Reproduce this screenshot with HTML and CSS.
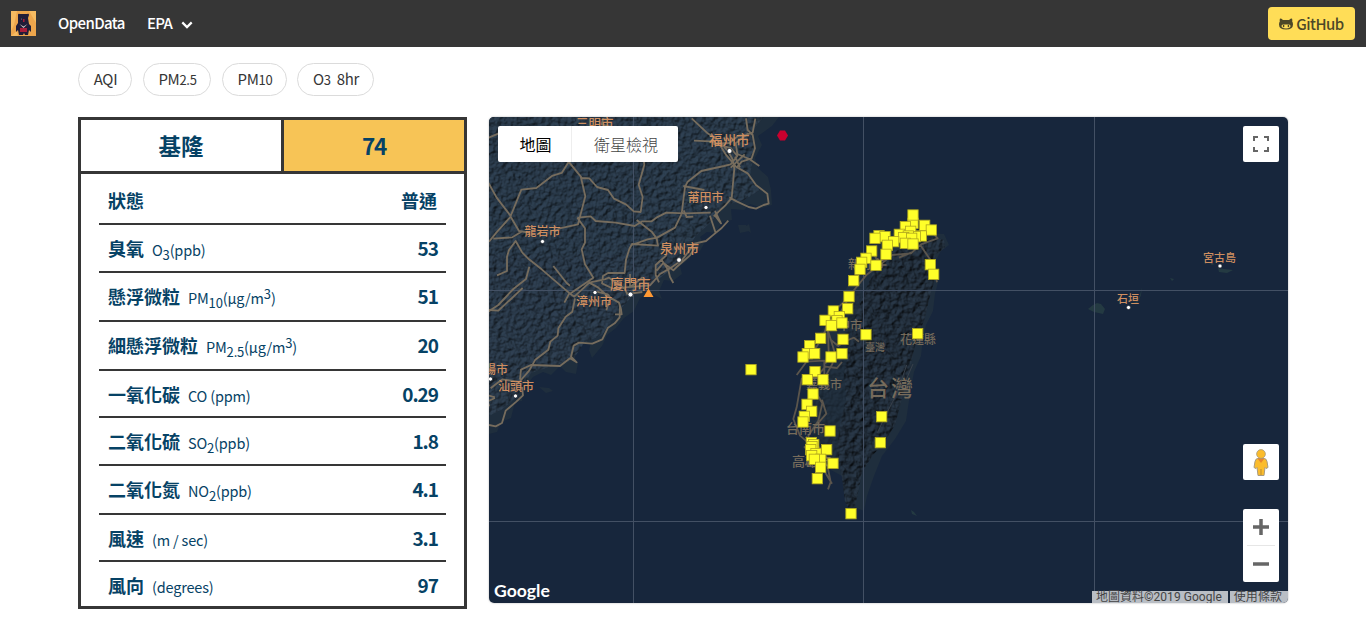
FILE: index.html
```html
<!DOCTYPE html>
<html lang="zh-Hant">
<head>
<meta charset="utf-8">
<title>OpenData EPA</title>
<link rel="stylesheet" href="styles.css">
</head>
<body>
<nav class="navbar">
  <svg class="logo" viewBox="0 0 25 25"><rect width="25" height="25" fill="#eda64c"/><path d="M0 0h6L3 14 0 20zM18 0h7v12zM0 25l6-5 1 5z" fill="#f6bb61"/><path d="M7 4q0-2 2-1h7q2-1 2 1l-1 3 1 6 2 2v6l-2-2-1 5h-3l-1-2-1 2H8l-1-5-2 2v-6l2-3V7z" fill="#201d38"/><path d="M8.500 13l4 2.500 4-2.500-4 4z" fill="#d8c8c8"/><path d="M9 17h7v4H9zM12 8h1.500v3H12z" fill="#a91c39"/><circle cx="10.500" cy="8" r=".5" fill="#8884a0"/></svg>
  <a class="nav-link">OpenData</a>
  <a class="nav-link">EPA</a>
  <svg class="chevron" viewBox="0 0 12 8"><path d="M1.300 1.400L6 6.100l4.700-4.700" fill="none" stroke="#fff" stroke-width="2.200"/></svg>
  <a class="github"><svg class="cat" viewBox="0 0 14 12"><path d="M1 .6Q2.500.6 4 2h6Q11.500.6 13 .6 13.600 2 13.200 3.400 14 4.500 14 6.500 14 11.500 7 11.500T0 6.500Q0 4.500.8 3.400.4 2 1 .6z" fill="#4c4728"/><path d="M2.500 8Q2.500 6.500 4 6.500h6q1.500 0 1.500 1.500 0 2.400-4.500 2.400T2.500 8z" fill="#ffdd57"/><ellipse cx="4.600" cy="8" rx=".8" ry="1.200" fill="#4c4728"/><ellipse cx="9.400" cy="8" rx=".8" ry="1.200" fill="#4c4728"/></svg><span>GitHub</span></a>
</nav>
<main class="page">
  <div class="filters">
    <a class="pill aqi">AQI</a><a class="pill pm25">PM<small>2.5</small></a><a class="pill pm10">PM<small>10</small></a><a class="pill ozone">O<small>3</small>&nbsp; 8hr</a>
  </div>
  <div class="content">
    <section class="panel">
      <header class="summary"><div class="station">基隆</div><div class="score">74</div></header>
      <div class="rows">
        <div class="row first"><b>狀態</b><strong class="cjk">普通</strong></div>
        <div class="row h48"><b>臭氧</b><span>O<sub>3</sub>(ppb)</span><strong>53</strong></div>
        <div class="row"><b>懸浮微粒</b><span>PM<sub>10</sub>(μg/m<sup>3</sup>)</span><strong>51</strong></div>
        <div class="row"><b>細懸浮微粒</b><span>PM<sub>2.5</sub>(μg/m<sup>3</sup>)</span><strong>20</strong></div>
        <div class="row h47"><b>一氧化碳</b><span>CO (ppm)</span><strong>0.29</strong></div>
        <div class="row h48"><b>二氧化硫</b><span>SO<sub>2</sub>(ppb)</span><strong>1.8</strong></div>
        <div class="row"><b>二氧化氮</b><span>NO<sub>2</sub>(ppb)</span><strong>4.1</strong></div>
        <div class="row h47"><b>風速</b><span>(m / sec)</span><strong>3.1</strong></div>
        <div class="row last"><b>風向</b><span>(degrees)</span><strong>97</strong></div>
      </div>
    </section>
    <section class="map">
      <svg class="canvas" viewBox="489 117 799 486">
        <defs>
          <filter id="relief" x="0" y="0" width="100%" height="100%" color-interpolation-filters="sRGB">
            <feTurbulence type="fractalNoise" baseFrequency=".2" numOctaves="4" seed="8" result="n"/>
            <feDiffuseLighting in="n" surfaceScale="2.200" diffuseConstant="1.200" lighting-color="#2b3a4a"><feDistantLight azimuth="225" elevation="55"/></feDiffuseLighting>
            <feComposite in2="SourceAlpha" operator="in"/>
          </filter>
          <filter id="ridges" x="0" y="0" width="100%" height="100%" color-interpolation-filters="sRGB">
            <feTurbulence type="fractalNoise" baseFrequency=".17" numOctaves="4" seed="3" result="n"/>
            <feDiffuseLighting in="n" surfaceScale="2.500" diffuseConstant="1.150" lighting-color="#24313f"><feDistantLight azimuth="225" elevation="52"/></feDiffuseLighting>
            <feComposite in2="SourceAlpha" operator="in"/>
          </filter>
          <rect id="m" x="-15.500" y="-15.500" width="31" height="31" fill="#ffff29" stroke="#b2a820" stroke-width="2.500"/>
        </defs>
        <rect x="489" y="117" width="799" height="486" fill="#17263c"/>
        <g class="coast">
          <path d="M489 117H779L772 126 758 136 762 145 755 158 758 168 768 177 771 190 772 205 762 208 750 204 744 210 731 209 732 220 722 222 716 233 707 232 700 237 704 244 700 251 692 250 690 258 680 266 682 274 673 281 664 280 659 291 662 299 650 293 640 298 634 311 624 318 616 328 607 335 602 346 592 358 589 350 591 342 580 344 573 355 578 363 576 374 566 372 560 366 551 375 543 372 533 377 524 388 522 401 515 402 511 418 501 422 497 432 489 434Z"/>
          <path d="M539 387l10 1 4 3-7 2zM738 225h8l3 6-9 2zM744 228l5-4 2 9z"/>
          <path d="M909 216l8 3 10 14 17 1 5 11-8 6-5 9-1 9 4 10-4 15-2 17-7 14-3 13-2 18-7 16-4 22-4 27-11 18-13 17-8 20-7 20-3 15-10-4-4-15-8-16-11-6-8-10-6-15-8-20-1-20 2-28-1-23 11-21 14-17 13-29 12-18 11-22 15-10 16-8z"/>
          <path class="isle" d="M1088 309l5-4 4-2 4 1 4 5-2 5-9-2zM1218 268l6 1 9 1-6 3-8-1zM1130 304l6-2 4-7 2-8-1 8-4 9zM1209 263l6 1-3 1zM1170 278l4 1-2 2zM911 510l3 2 3 4-5-2z"/>
        </g>
        <path filter="url(#relief)" opacity=".85" d="M489 117H764L750 133 755 148 750 175 760 190 744 200 727 205 710 223 696 236 684 253 670 270 652 284 635 293 616 314 602 335 584 343 573 360 546 368 531 373 516 398 501 410 489 416Z"/>
        <path filter="url(#ridges)" d="M891 251L912 248 929 236 944 240 945 248 936 254 933 263 935 279 929 300 925 318 919 333 914 350 909 374 902 399 895 425 883 444 872 456 862 473 857 498 854 516 845 502 842 478 837 450 840 425 846 398 844 373 850 346 854 320 865 291 875 268Z"/>
        <path filter="url(#ridges)" opacity=".35" d="M864 275l-15 40-24 40-15 48 3 34 20 22 10-3 2-53 5-43 8-45z"/>
        <path class="grid" d="M633.500 117v486M863.500 117v486M1094.500 117v486M489 290.500h799M489 521.500h799"/>
        <g class="roads" transform="translate(480 110) scale(.33333)">
          <path d="M25 218l25 45 42 55 32-79 45-5 47-36 29-9 21-33 36 43 14 60-22 84-55 12-16 10M27 395l22-27 43-48 25 43 30 5M40 386l57-4 31-19M25 83l30-12M266 155l40 49 22 1 23 26 33 9 18 26 37 18 22 20 21 2 6-45-12-37 17-60-5-40M370 25l-5 18 65 17M292 323l40-4 15 14 60 5 57 10 23-14 28 0 14-11 30-15 56 2 77-2M470 330l45 35 15 20 4 22-78-5-8 15-10 32-4 40-50 0-15 9-3 22 35 17 35-5 36-3 38-3 30-34 35-20 31-22 8-10 29-39 35-8 20-17 27-22 20-22M455 405l48-17 28-5 54-30 20-42 10-80 8-16 41-32 68-15 20-5 20-25-20-24-20-5-40-15-50-2M635 25l48 45 35 24 24 27 15 25 6 30-8 88-19 22-35 33M715 97l22 36 32 38 34 19 25 35 34 26 4 30-15 4-23 11-22-5-36-17-22-12M690 317l17 52M705 303l18 37-20-26M610 228l63 12M700 102l48-3 27-22 23-2 20-7 8-42M798 25l5 35 15 15 7 40-10 30-30 10-15 18M805 70l-38 30 5 32 36 15 30 21M752 173l42-40M765 140l15 32M292 323l23 32 0 43-10 20 10 45 25 40-70 48-85-73-38-30-20-20-20-35-20 27-6 20 0 43-30 13M148 470l-10 37-38 30-45 48-30 20M220 468l40 51 10 8M327 518l47-10 13-5 47 33 8 16 45-6M328 518l-45 42-15-10-15 28M328 518l27 15 27 25 35 20 6 20 2 15-20 0M560 435l-33 30 0 30 10 22M530 482l20-23 30 22 10-10 40-35 15-23 10-1M545 450l20 31 5 20 10 18M450 492v40l38-30M350 545l33 8 8 10-12 38M640 320l-20 1-9-20"/>
          <path d="M25 600l30 2 73-68M285 565l-8 40-20 15-22 35-2 22-22 18-6 24-39 30-18 32-30 35-50-8-15 10-21 17M120 809l3-30 30-14 87 3 30-23 20 12-17-17 8-33 16-9 40 3 30-13 17-35 20-13 15-18 1-35M27 945l20 4 19-10 11-37 32-27 20-19-3-25M28 889l-5-15 22-10M45 862l-18-5"/>
        </g>
        <g class="roads faint" transform="translate(780 195) scale(.33333)">
          <path d="M455 110l18 20-50 18-30 27-56 5-30 24-47 35-45 55-35 60-35 32-20 45-35 55-40 54M421 150l35 52 15 60M395 172l-38 16M320 210l-20 0-17-30M207 305l-60 60-18 65-35 18M190 350l-47 38 3 82-10 37M145 410l20 65-8 32-18 32M150 433l25 20 22-15 25-10 15 12M78 500l55-3 0 45-68 9-15 86-10 35 20 50 35 30 36 73 25 41M102 555l34-40 35 4 15-18M99 577l28 48-12 52-30 45 12 57 45 32 10 50-8 22M126 614l13 42-48 55M77 725l49 39 18 30M72 754l36 41-32 15"/>
          <path class="thin" d="M380 510l-29 85-38 73-20 45M373 567l26-60"/>
        </g>
        <g class="labels">
          <text x="576" y="128" font-size="12.500">三明市</text><text x="709" y="145" font-size="13.500">福州市</text><text x="687.500" y="202" font-size="12">莆田市</text><text x="524.500" y="236" font-size="12">龍岩市</text><text x="660" y="253" font-size="13">泉州市</text><text x="610" y="289" font-size="13.500">廈門市</text><text x="576" y="306" font-size="12">漳州市</text><text x="484" y="374" font-size="12">陽市</text><text x="498" y="391" font-size="12">汕頭市</text><text x="1203" y="262" font-size="11">宮古島</text><text x="1117" y="303" font-size="11">石垣</text>
        </g>
        <g class="cities"><circle cx="729.500" cy="151" r="2.500"/><circle cx="706" cy="207.500" r="2.100"/><circle cx="542.500" cy="241.500" r="2.100"/><circle cx="679" cy="260" r="2.400"/><circle cx="595" cy="292.500" r="2.100"/><circle cx="630.500" cy="294.500" r="2.500"/><circle cx="490.500" cy="379" r="2.100"/><circle cx="515.500" cy="396" r="2.100"/><circle cx="1128.500" cy="307.500" r="2.100"/><circle cx="1220" cy="266" r="2.100"/></g>
        <g class="labels muted">
          <text x="848" y="269" font-size="12">新竹市</text><text x="826" y="330" font-size="12">臺中市</text><text x="865" y="351" font-size="10">臺灣</text><text x="900" y="344" font-size="12">花蓮縣</text><text x="867" y="396" font-size="22" letter-spacing="2">台灣</text><text x="806" y="389" font-size="12">嘉義市</text><text x="786" y="433" font-size="13">台南市</text><text x="792" y="466" font-size="13">高雄市</text>
        </g>
        <g transform="translate(780 195) scale(.33333)">
          <use href="#m" x="399" y="85"/><use href="#m" x="399" y="60"/><use href="#m" x="376" y="95"/><use href="#m" x="434" y="91"/><use href="#m" x="454" y="105"/><use href="#m" x="297" y="122"/><use href="#m" x="315" y="125"/><use href="#m" x="285" y="130"/><use href="#m" x="392" y="109"/><use href="#m" x="358" y="118"/><use href="#m" x="424" y="123"/><use href="#m" x="406" y="125"/><use href="#m" x="385" y="123"/><use href="#m" x="371" y="128"/><use href="#m" x="395" y="130"/><use href="#m" x="341" y="140"/><use href="#m" x="322" y="151"/><use href="#m" x="318" y="178"/><use href="#m" x="376" y="145"/><use href="#m" x="399" y="147"/><use href="#m" x="275" y="168"/><use href="#m" x="258" y="190"/><use href="#m" x="245" y="202"/><use href="#m" x="240" y="223"/><use href="#m" x="288" y="211"/><use href="#m" x="451" y="209"/><use href="#m" x="461" y="238"/><use href="#m" x="221" y="257"/><use href="#m" x="207" y="305"/><use href="#m" x="203" y="341"/><use href="#m" x="160" y="348"/><use href="#m" x="135" y="376"/><use href="#m" x="178" y="365"/><use href="#m" x="171" y="377"/><use href="#m" x="154" y="392"/><use href="#m" x="186" y="384"/><use href="#m" x="122" y="430"/><use href="#m" x="189" y="433"/><use href="#m" x="258" y="419"/><use href="#m" x="413" y="416"/><use href="#m" x="89" y="452"/><use href="#m" x="186" y="476"/><use href="#m" x="153" y="486"/><use href="#m" x="82" y="476"/><use href="#m" x="104" y="476"/><use href="#m" x="69" y="486"/><use href="#m" x="-87" y="524"/>
        </g>
        <g transform="translate(780 350) scale(.33333)">
          <use href="#m" x="105" y="65"/><use href="#m" x="82" y="89"/><use href="#m" x="129" y="89"/><use href="#m" x="99" y="132"/><use href="#m" x="81" y="163"/><use href="#m" x="95" y="184"/><use href="#m" x="73" y="199"/><use href="#m" x="69" y="216"/><use href="#m" x="150" y="243"/><use href="#m" x="305" y="200"/><use href="#m" x="301" y="278"/><use href="#m" x="94" y="278"/><use href="#m" x="101" y="284"/><use href="#m" x="96" y="290"/><use href="#m" x="92" y="299"/><use href="#m" x="108" y="311"/><use href="#m" x="95" y="317"/><use href="#m" x="140" y="299"/><use href="#m" x="122" y="328"/><use href="#m" x="103" y="328"/><use href="#m" x="122" y="352"/><use href="#m" x="159" y="340"/><use href="#m" x="112" y="386"/><use href="#m" x="213" y="491"/>
        </g>
        <path d="M780 130.500h5l3 5-3 5h-5l-3-5z" fill="#c8002e"/><path d="M643.500 297l5-8.500 5 8.500z" fill="#ff9933"/>
      </svg>
      <div class="map-types"><span class="active">地圖</span><span>衛星檢視</span></div>
      <div class="control fullscreen"><svg viewBox="0 0 16 16"><path d="M1 5V1h4M11 1h4v4M15 11v4h-4M5 15H1v-4" fill="none" stroke="#666" stroke-width="2"/></svg></div>
      <div class="control pegman"><svg viewBox="0 0 16 27"><path d="M5 9.500h6q2.500 0 3 3l1 6-2 1-1-1-1 8H5l-1-8-1 1-2-1 1-6q.5-3 3-3z" fill="#fbbc2c" stroke="#a99b80"/><path d="M4.500 9.500h7L8 14z" fill="#e8842f"/><path d="M8 20v6" stroke="#b98b2e"/><circle cx="8" cy="5" r="4.400" fill="#fbbc2c" stroke="#9b927c" stroke-width=".7"/></svg></div>
      <div class="zoom"><div class="zin"><svg viewBox="0 0 16 16"><path d="M0 8h16M8 0v16" stroke="#666" stroke-width="3.500"/></svg></div><div class="zout"><svg viewBox="0 0 16 16"><path d="M0 8h16" stroke="#666" stroke-width="3.500"/></svg></div></div>
      <div class="google">Google</div>
      <div class="legal"><span>地圖資料©2019 Google</span><span>使用條款</span></div>
    </section>
  </div>
</main>
</body>
</html>
```
FILE: styles.css
```css
* { box-sizing: border-box; }
body { margin: 0; height: 625px; overflow: hidden; background: #fff; font-family: "Noto Sans CJK TC", "Noto Sans", sans-serif; color: #363636; }
svg { display: block; }
.navbar { height: 47px; background: #363636; display: flex; align-items: center; padding: 0 11px; color: #fff; }
.logo { width: 25px; height: 25px; }
.nav-link { font-size: 15px; font-weight: 500; margin-left: 22px; line-height: 24px; letter-spacing: -.6px; padding-bottom: 2px; }
.chevron { width: 12px; height: 8px; margin: 2px 0 0 9px; }
.github { margin-left: auto; width: 87px; height: 33px; border-radius: 4px; background: #ffdd57; color: #4c4728; font-size: 15px; font-weight: 500; display: flex; align-items: center; justify-content: center; gap: 3px; letter-spacing: -.5px; }
.github span { padding-bottom: 1px; }
.cat { width: 14px; height: 12px; }
.page { padding: 16px 78px 0; }
.filters { display: flex; height: 33px; gap: 11px; }
.pill { height: 33px; border: 1px solid #dbdbdb; border-radius: 17px; font-size: 15px; line-height: 30px; text-align: center; white-space: nowrap; letter-spacing: -.3px; padding-left: 1px; }
.pill small { font-size: 13px; }
.aqi { width: 54px; }
.pm25 { width: 68px; }
.pm10 { width: 65px; }
.ozone { width: 77px; margin-left: -1px; }
.content { display: flex; gap: 22px; margin-top: 21px; align-items: flex-start; }
.panel { width: 389px; height: 492px; border: 3px solid #363636; color: #064265; }
.summary { display: flex; height: 54px; border-bottom: 3px solid #363636; font-size: 22.500px; font-weight: 700; text-align: center; line-height: 51px; }
.station { width: 203px; border-right: 3px solid #363636; }
.score { flex: 1; background: #f7c456; font-weight: 700; letter-spacing: -1.200px; }
.rows { padding: 2px 18px 0; }
.row { height: 49px; border-bottom: 2px solid #363636; display: flex; align-items: baseline; padding: 0 9px; line-height: 45px; white-space: nowrap; }
.first { line-height: 48px; }
.row b { font-size: 18px; font-weight: 700; }
.row span { font-size: 14.500px; margin-left: 8px; letter-spacing: -.18px; }
.row strong { margin-left: auto; font-size: 19px; font-weight: 700; letter-spacing: -1px; margin-right: -1px; }
.row .cjk { font-size: 18px; font-weight: 700; letter-spacing: 0; margin-right: 0; }
.row sub, .row sup { font-size: 13px; line-height: 0; position: relative; vertical-align: baseline; }
.row sub { bottom: -.3em; }
.row sup { top: -.4em; }
.h48 { height: 48px; }
.h47 { height: 47px; }
.last { border: 0; height: 44px; }
.map { position: relative; width: 799px; height: 486px; border-radius: 5px; overflow: hidden; box-shadow: 0 0 2px #aaa; }
.canvas { width: 799px; height: 486px; }
.coast { fill: #1f2e3d; }
.isle { fill: #243a42; }
.grid { fill: none; stroke: #435064; stroke-width: 1; }
.roads { fill: none; stroke: #766c5d; stroke-width: 5.500; stroke-linejoin: round; }
.faint { stroke: #5b554c; }
.thin { stroke: #38404a; stroke-width: 3; }
.labels { fill: #ce8e60; font-weight: 500; }
.muted { fill: #766b5b; }
.cities { fill: #fff; stroke: #171f2a; stroke-width: .7; }
.map-types { position: absolute; left: 9px; top: 9px; width: 180px; height: 36px; background: #fff; border-radius: 2px; display: flex; font-size: 16px; font-weight: 300; line-height: 36px; text-align: center; color: #444; }
.map-types span { flex: 1; padding-left: 2px; }
.map-types .active { flex: 0 0 74px; color: #000; font-weight: 400; border-right: 1px solid #eee; }
.control, .zoom { position: absolute; right: 9px; width: 36px; background: #fff; border-radius: 2px; }
.control { height: 36px; display: flex; align-items: center; justify-content: center; }
.fullscreen { top: 9px; }
.fullscreen svg, .zoom svg { width: 16px; height: 16px; }
.pegman { top: 327px; }
.pegman svg { width: 16px; height: 27px; }
.zoom { top: 392px; height: 73px; padding: 0 4px; }
.zin, .zout { height: 36px; display: flex; align-items: center; justify-content: center; }
.zin { height: 37px; border-bottom: 1px solid #e6e6e6; }
.google { position: absolute; left: 5px; top: 463px; font: 700 17.600px/22px Lato, sans-serif; color: #fff; }
.legal { position: absolute; right: 0; bottom: 0; height: 12px; display: flex; gap: 2px; font: 400 12px/12px Roboto, "Noto Sans CJK TC", sans-serif; color: #444; }
.legal span { background: #b9bec5; padding: 0 6px 0 4px; white-space: nowrap; letter-spacing: .04px; }
```
